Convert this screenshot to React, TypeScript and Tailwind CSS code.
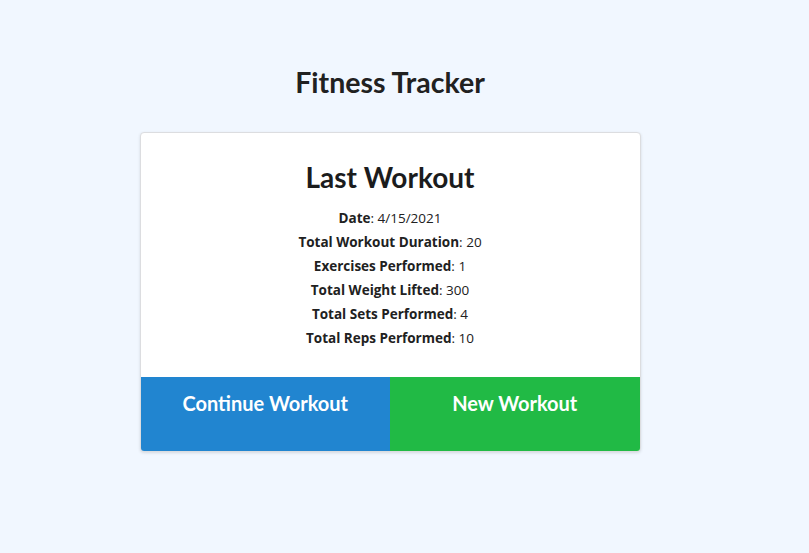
const stats = [
  { label: "Date", value: "4/15/2021" },
  { label: "Total Workout Duration", value: "20" },
  { label: "Exercises Performed", value: "1" },
  { label: "Total Weight Lifted", value: "300" },
  { label: "Total Sets Performed", value: "4" },
  { label: "Total Reps Performed", value: "10" },
];

export default function App() {
  return (
    <div className="min-h-[553px] bg-[#f1f7ff] text-[#212121]">
      <div className="w-[780px] flex flex-col items-center pt-[62px]">
        <h1 className="font-['Lato',sans-serif] font-bold text-[28.5px] leading-[40px]">Fitness Tracker</h1>

        <div className="mt-[30px] w-[501px] bg-white rounded-[4px] border border-[#dcdde0] shadow-[0_1px_3px_rgba(0,0,0,0.12)] overflow-hidden">
          <div className="flex flex-col items-center pt-[24px] pb-[27px]">
            <h2 className="font-['Lato',sans-serif] font-bold text-[28px] leading-[40px] text-[#1b1c1d]">Last Workout</h2>
            <div className="mt-[9px] flex flex-col items-center font-['Open_Sans',sans-serif] text-[13.5px] leading-[24px]">
              {stats.map((s) => (
                <p key={s.label}>
                  <span className="font-bold">{s.label}</span>: {s.value}
                </p>
              ))}
            </div>
          </div>
          <div className="flex font-['Lato',sans-serif] font-bold text-[20px] text-white">
            <button className="w-1/2 h-[74px] bg-[#2185d0] pt-[12px] flex justify-center items-start leading-[28px]">
              Continue Workout
            </button>
            <button className="w-1/2 h-[74px] bg-[#21ba45] pt-[12px] flex justify-center items-start leading-[28px]">
              New Workout
            </button>
          </div>
        </div>
      </div>
    </div>
  );
}
